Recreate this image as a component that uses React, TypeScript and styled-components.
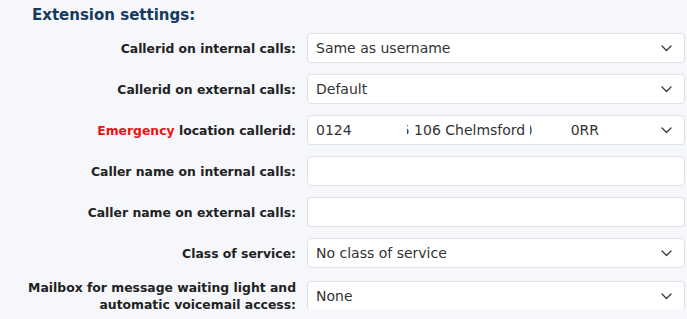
import styled, { createGlobalStyle } from "styled-components";

const GlobalStyle = createGlobalStyle`
    html, body {
        margin: 0;
        padding: 0;
        background: #f5f7fb;
        font-family: "DejaVu Sans", Verdana, sans-serif;
    }
`;

const Wrapper = styled.div`
    display: flex;
    flex-direction: column;
    padding: 6px 2px 0 0;
`;

const Heading = styled.h2`
    margin: 0 0 9px 32px;
    font-size: 15px;
    line-height: 18px;
    font-weight: 700;
    color: #163a5f;
`;

const Form = styled.div`
    display: flex;
    flex-direction: column;
    gap: 11px;
`;

const Row = styled.div`
    display: grid;
    grid-template-columns: 296px 1fr;
    column-gap: 11px;
    align-items: center;
    height: 30px;
`;

const Label = styled.div`
    text-align: right;
    font-size: 12.4px;
    line-height: 17px;
    font-weight: 700;
    color: #222;
    white-space: nowrap;
`;

const Danger = styled.span`
    color: #ee1111;
`;

const Select = styled.div`
    box-sizing: border-box;
    height: 30px;
    display: flex;
    align-items: center;
    justify-content: space-between;
    padding: 0 12px 0 8px;
    background: #fff;
    border: 1px solid #dfe2e8;
    border-radius: 4px;
`;

const Value = styled.span`
    font-size: 14px;
    color: #333;
    white-space: pre;
    display: flex;
    align-items: center;
`;

const Blank = styled.span<{ $w: number }>`
    display: inline-block;
    width: ${(p) => p.$w}px;
`;

const Clip = styled.span<{ $w: number }>`
    display: inline-block;
    width: ${(p) => p.$w}px;
    overflow: hidden;
    direction: rtl;
`;

const TextInput = styled.input`
    box-sizing: border-box;
    height: 30px;
    width: 100%;
    margin: 0;
    padding: 0 8px;
    background: #fff;
    border: 1px solid #dfe2e8;
    border-radius: 4px;
    font-family: "DejaVu Sans", Verdana, sans-serif;
    font-size: 14px;
    outline: none;
`;

type Field = {
    label: React.ReactNode;
    kind: "select" | "input";
    value?: React.ReactNode;
};

const fields: Field[] = [
    { label: "Callerid on internal calls:", kind: "select", value: "Same as username" },
    { label: "Callerid on external calls:", kind: "select", value: "Default" },
    {
        label: (
            <>
                <Danger>Emergency</Danger> location callerid:
            </>
        ),
        kind: "select",
        value: (
            <>
                0124
                <Blank $w={55} />
                <Clip $w={3}>5</Clip>
                {" 106 Chelmsford "}
                <Clip $w={3}>(</Clip>
                <Blank $w={38} />
                0RR
            </>
        ),
    },
    { label: "Caller name on internal calls:", kind: "input" },
    { label: "Caller name on external calls:", kind: "input" },
    { label: "Class of service:", kind: "select", value: "No class of service" },
    {
        label: (
            <>
                Mailbox for message waiting light and
                <br />
                automatic voicemail access:
            </>
        ),
        kind: "select",
        value: "None",
    },
];

function Chevron() {
    return (
        <svg width="11" height="7" viewBox="0 0 11 7" fill="none">
            <polyline points="1,1 5.5,5.5 10,1" stroke="#3a3d44" strokeWidth="1.4" strokeLinecap="round" strokeLinejoin="round" />
        </svg>
    );
}

export default function App() {
    return (
        <>
            <GlobalStyle />
            <Wrapper>
                <Heading>Extension settings:</Heading>
                <Form>
                    {fields.map((f, i) => (
                        <Row key={i}>
                            <Label>{f.label}</Label>
                            {f.kind === "select" ? (
                                <Select>
                                    <Value>{f.value}</Value>
                                    <Chevron />
                                </Select>
                            ) : (
                                <TextInput type="text" />
                            )}
                        </Row>
                    ))}
                </Form>
            </Wrapper>
        </>
    );
}
